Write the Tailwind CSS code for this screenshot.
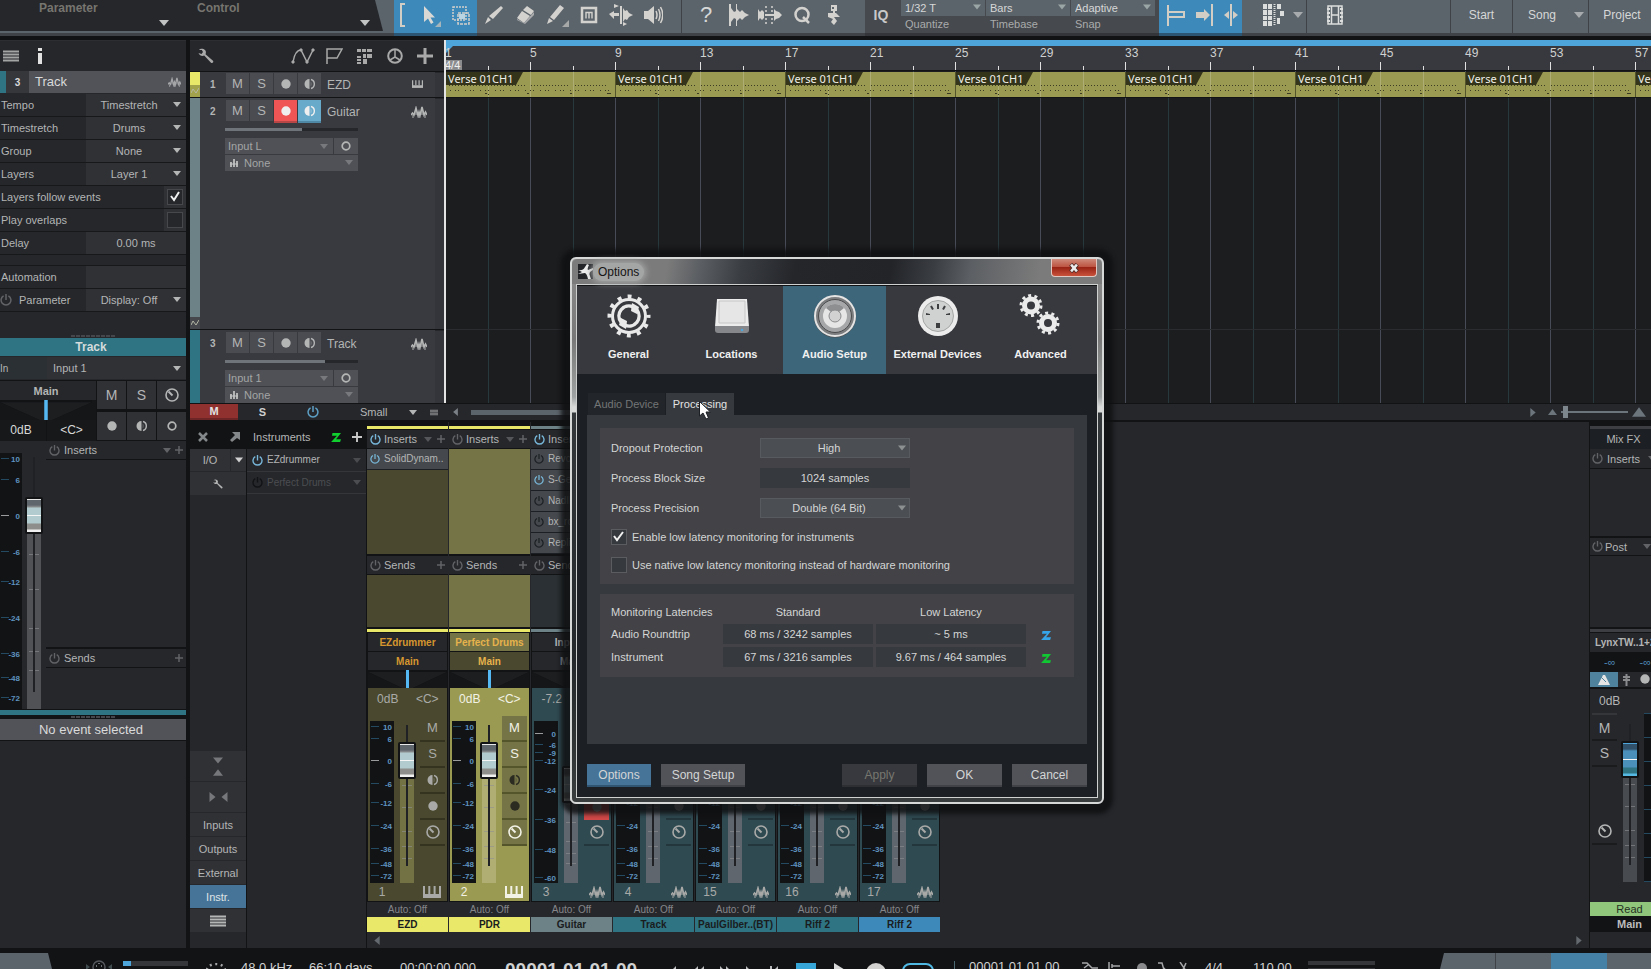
<!DOCTYPE html>
<html lang="en">
  <head>
    <meta charset="UTF-8" />
    <meta name="viewport" content="width=device-width, initial-scale=1.0" />
    <title>Song - Options</title>
    <script src="https://cdn.jsdelivr.net/npm/@tailwindcss/browser@4"></script>
  </head>

  <body class="relative flex h-screen flex-col overflow-hidden bg-[#121315] font-['Liberation_Sans',sans-serif] text-[11px] leading-4 text-[#b4b5b5] select-none">
    <!-- Icon set -->
    <svg class="hidden">
      <symbol id="down" viewBox="0 0 10 6"><path d="M0 0H10L5 6Z" fill="currentColor" /></symbol>
      <symbol id="left" viewBox="0 0 6 10"><path d="M6 0V10L0 5Z" fill="currentColor" /></symbol>
      <symbol id="right" viewBox="0 0 6 10"><path d="M0 0V10L6 5Z" fill="currentColor" /></symbol>
      <symbol id="up" viewBox="0 0 12 8"><path d="M0 8H12L6 0Z" fill="currentColor" /></symbol>
      <symbol id="plus" viewBox="0 0 16 16"><path d="M8 0V16M0 8H16" stroke="currentColor" stroke-width="3" /></symbol>
      <symbol id="list" viewBox="0 0 16 12"><path d="M0 1.5H16M0 4.5H16M0 7.5H16M0 10.5H16" stroke="currentColor" stroke-width="2" /></symbol>
      <symbol id="power" viewBox="0 0 12 12"><path d="M3.6 1.8A4.9 4.9 0 1 0 8.4 1.8M6 0V6" fill="none" stroke="currentColor" stroke-width="1.5" /></symbol>
      <symbol id="wave" viewBox="0 0 16 12"><path d="M0 9L1.500 7L3 9L5 2L7 9.500L8 6L9 9.500L11 1L13 9L14.500 6L16 9" fill="none" stroke="currentColor" stroke-width="1.600" /><path d="M2 9V12M5 4V9M8 8V12M11 3V9M14 8V12" stroke="currentColor" stroke-width="1" /></symbol>
      <symbol id="keys" viewBox="0 0 18 12"><path d="M1 0V11H17V0M6.300 0V8M11.600 0V8" fill="none" stroke="currentColor" stroke-width="2" /><path d="M0 8H18V12H0Z" fill="currentColor" /></symbol>
      <symbol id="half" viewBox="0 0 12 12"><path d="M5.500 1A5 5 0 0 0 5.500 11Z" fill="currentColor" /><path d="M7 1.500A4.700 4.700 0 0 1 7 10.500" fill="none" stroke="currentColor" stroke-width="1.400" /><path d="M6.500 3.500A3 3 0 0 1 6.500 8.500Z" fill="currentColor" opacity=".35" /></symbol>
      <symbol id="dot" viewBox="0 0 12 12"><circle cx="6" cy="6" r="4.700" fill="currentColor" /></symbol>
      <symbol id="ring" viewBox="0 0 12 12"><circle cx="6" cy="6" r="3.800" fill="none" stroke="currentColor" stroke-width="1.700" /></symbol>
      <symbol id="knob" viewBox="0 0 14 14"><circle cx="7" cy="7" r="6" fill="none" stroke="currentColor" stroke-width="1.600" /><path d="M7.500 7.500L3.500 3.500" stroke="currentColor" stroke-width="2" /></symbol>
      <symbol id="wrench" viewBox="0 0 16 16"><path d="M1 2C2 .5 5 0 7 2C8.300 3.500 8 5 7.500 6.200L15 12.800C16 14 14.500 15.800 13 14.800L6.200 7.600C4 8.500 1.500 7.500 .5 5L3.500 6L5 4L3.800 2Z" fill="currentColor" /></symbol>
      <symbol id="zed" viewBox="0 0 12 10"><path d="M1.500 0H11L5.500 7H11L10 10H0L6.500 3H1Z" fill="currentColor" /></symbol>
      <symbol id="line" viewBox="0 0 8 6"><path d="M0 5L2 1L5 5L8 0" fill="none" stroke="currentColor" stroke-width="1" /></symbol>
      <symbol id="bars" viewBox="0 0 8 8"><path d="M1 3V8M4 0V8M7 2V8" stroke="currentColor" stroke-width="1.700" /><path d="M0 5H8" stroke="currentColor" stroke-width="1" /></symbol>
      <symbol id="grip" viewBox="0 0 44 2"><path d="M0 1H44" stroke="#45464b" stroke-width="2" stroke-dasharray="4 1" /></symbol>
      <symbol id="pan" viewBox="0 0 79 18" preserveAspectRatio="none"><path d="M0 0H79V18H0Z" fill="#121315" /><path d="M0 2L34 18H45L79 2Z" fill="#1d1e20" /><path d="M0 2L34 18H0ZM79 2L45 18H79Z" fill="#151618" /><path d="M39.500 0V18" stroke="#55b9f3" stroke-width="3" /></symbol>
    </svg>

    <!-- Main toolbar -->
    <header class="flex h-9 shrink-0 text-[12px] text-[#d6d7d7]">
      <div class="relative flex w-[394px] shrink-0 border-b-[3px] border-[#3f4247] bg-[#5c646b]">
        <svg class="absolute inset-0 h-[31px] w-[384px]" viewBox="0 0 384 31" preserveAspectRatio="none"><path d="M0 0H375L383 31H0Z" fill="#25272b" /></svg>
        <div class="relative flex w-[175px] items-start pl-[39px] font-bold text-[#77756f]">Parameter<svg class="mt-5 ml-[61px] h-[6px] w-[10px] text-[#c2c4c4]"><use href="#down" /></svg></div>
        <div class="relative flex items-start pl-[22px] font-bold text-[#77756f]">Control<svg class="mt-5 ml-[120px] h-[6px] w-[10px] text-[#c2c4c4]"><use href="#down" /></svg></div>
      </div>
      <div class="flex items-center border-b-[3px] border-[#2b5573] bg-[#3d8aba] pb-1">
        <button class="grid w-[18px] place-items-center" aria-label="Tool group"><svg class="h-6 w-[6px]" viewBox="0 0 6 24"><path d="M5 1H1V23H5" fill="none" stroke="#d2cdc5" stroke-width="2" /></svg></button>
        <button class="grid w-[33px] place-items-center" aria-label="Arrow tool"><svg class="h-6 w-6" viewBox="0 0 24 24"><path d="M7 3V19L11 15.500L14 21L16.500 19.500L13.500 14.500H18Z" fill="#d9d8d5" /><path d="M24 18V24H18Z" fill="#a5b5bb" /></svg></button>
        <button class="grid w-8 place-items-center" aria-label="Range tool"><svg class="h-5 w-5" viewBox="0 0 20 20" fill="none" stroke="#d2d0cc" stroke-width="1.500"><path d="M2 2H15V15H2Z" stroke-dasharray="2 1" /><path d="M7 8H18V19H7Z" stroke-dasharray="3 1" /><path d="M8 9H14V14H8Z" fill="#b9d4e2" stroke="none" /></svg></button>
      </div>
      <div class="flex w-[204px] items-center border-b-[3px] border-[#3f4247] bg-[#5c646b] pb-1">
        <button class="grid w-8 place-items-center" aria-label="Split tool"><svg class="h-5 w-5" viewBox="0 0 20 20" fill="#d4d2cf"><path d="M18 1L20 3L10 14L6 11ZM5 12L8 15L2 19Z" /></svg></button>
        <button class="grid w-8 place-items-center" aria-label="Eraser tool"><svg class="h-5 w-5" viewBox="0 0 20 20" fill="#d4d2cf"><path d="M12 1L19 6L16 10L8 5ZM7 6L15 11L9 18L2 13Z" /><path d="M19 7V10L10 19L2 15V14L9 18Z" fill="#a9abad" /></svg></button>
        <button class="grid w-8 place-items-center" aria-label="Paint tool"><svg class="h-6 w-6" viewBox="0 0 24 24" fill="#d4d2cf"><path d="M15 2L19 5L9 17L5 14ZM4 15L8 18L2 21Z" /><path d="M24 17V24H17Z" fill="#a7a9a9" /></svg></button>
        <button class="grid w-8 place-items-center" aria-label="Mute tool"><svg class="h-[18px] w-[18px]" viewBox="0 0 18 18" fill="none" stroke="#d4d2cf"><path d="M2 2H16V16H2Z" stroke-width="2.500" /><path d="M6 12.500V6.500H12V12.500M9 6.500V12.500" stroke-width="1.400" /></svg></button>
        <button class="grid w-8 place-items-center" aria-label="Bend tool"><svg class="h-6 w-6" viewBox="0 0 24 24" fill="#d4d2cf"><path d="M11 3H13V21H11ZM0 11L5 8V10H10V13H5V16ZM14 5L16 8L18 7L20 10L24 12L20 14L18 17L16 16L14 19ZM5 1L10 3L5 5ZM14 19L18 21L14 23Z" /></svg></button>
        <button class="grid w-8 place-items-center" aria-label="Listen tool"><svg class="h-5 w-5" viewBox="0 0 20 20" fill="#d4d2cf"><path d="M1 6H5L11 1V19L5 14H1Z" /><path d="M13 6Q15 10 13 14M15.500 4Q18.500 10 15.500 16M17.500 2Q22 10 17.500 18" fill="none" stroke="#d4d2cf" stroke-width="1.500" /></svg></button>
      </div>
      <div class="flex w-[184px] items-center border-b-[3px] border-l border-[#3f4247] bg-[#5c646b] pb-1 pl-2">
        <button class="w-8 text-[22px] leading-6" aria-label="Help">?</button>
        <button class="grid w-8 place-items-center" aria-label="Transient detection"><svg class="h-6 w-6" viewBox="0 0 24 24" fill="#d4d2cf"><path d="M3 1H5V23H3ZM10 1H11V23H10ZM5 5L8 9L10 8V16L8 15L5 19ZM11 6L14 9L16 7L19 10L23 12L19 14L16 17L14 15L11 18Z" /></svg></button>
        <button class="grid w-8 place-items-center" aria-label="Strip silence"><svg class="h-6 w-6" viewBox="0 0 24 24" fill="#d4d2cf"><path d="M0 6L2 9L4 7L6 9V15L4 17L2 15L0 18ZM16 6L18 8L21 9L24 12L21 15L18 16L16 18ZM7 11H16V13H7Z" /><path d="M8 3V21M14 3V21" stroke="#d4d2cf" stroke-dasharray="2 2" stroke-width="1.500" /></svg></button>
        <button class="grid w-8 place-items-center" aria-label="Quantize"><svg class="h-5 w-5" viewBox="0 0 20 20" fill="none" stroke="#d4d2cf" stroke-width="2.500"><circle cx="10" cy="9.500" r="6.500" /><path d="M11 12L17 18" /></svg></button>
        <button class="grid w-8 place-items-center" aria-label="Macros"><svg class="h-5 w-5" viewBox="0 0 20 20" fill="#d4d2cf"><path d="M7 0H13V6H7ZM9 6H11V8H9ZM4 8H12L16 12H10L13 16L10 20L7 17L9 14L4 12Z" /><path d="M8 2H10V4H8Z" fill="#5c646b" /></svg></button>
      </div>
      <div class="flex border-b-[3px] border-[#33353a] bg-[#46494d] text-[11px]">
        <button class="w-[36px] pr-1 pb-1 text-[14px] font-bold text-[#c8c8c8]">IQ</button>
        <div class="flex gap-px">
          <div class="relative w-[84px]">
            <select id="quantize" class="block h-4 w-full appearance-none bg-[#5c646b] pl-1 leading-4 outline-none"><option>1/32 T</option></select>
            <svg class="pointer-events-none absolute top-1 right-1 h-[6px] w-2 text-[#9aa6a6]"><use href="#down" /></svg>
            <label for="quantize" class="block pl-1 text-[#a9abac]">Quantize</label>
          </div>
          <div class="relative w-[84px]">
            <select id="timebase" class="block h-4 w-full appearance-none bg-[#5c646b] pl-1 leading-4 outline-none"><option>Bars</option></select>
            <svg class="pointer-events-none absolute top-1 right-1 h-[6px] w-2 text-[#9aa6a6]"><use href="#down" /></svg>
            <label for="timebase" class="block pl-1 text-[#a9abac]">Timebase</label>
          </div>
          <div class="relative mr-1 w-[84px]">
            <select id="snap" class="block h-4 w-full appearance-none bg-[#5c646b] pl-1 leading-4 outline-none"><option>Adaptive</option></select>
            <svg class="pointer-events-none absolute top-1 right-1 h-[6px] w-2 text-[#9aa6a6]"><use href="#down" /></svg>
            <label for="snap" class="block pl-1 text-[#a9abac]">Snap</label>
          </div>
        </div>
      </div>
      <div class="flex w-[83px] items-center justify-between border-b-[3px] border-[#2b5573] bg-[#3d8aba] pr-1 pb-1 pl-2">
        <button aria-label="Snap to start"><svg class="block h-6 w-[18px]" viewBox="0 0 18 24" fill="none" stroke="#d2cdc5" stroke-width="2"><path d="M1 2V23M2 9H17V14H2" /></svg></button>
        <button aria-label="Autoscroll"><svg class="block h-6 w-[18px]" viewBox="0 0 18 24" fill="#d2cdc5"><path d="M15 1H17V23H15ZM0 9H8V6L14 12L8 18V15H0Z" /></svg></button>
        <button aria-label="Cursor follows edit"><svg class="block h-6 w-[14px]" viewBox="0 0 14 24" fill="#d2cdc5"><path d="M6 1H8V23H6ZM0 12L5 8V16ZM14 12L9 8V16Z" /></svg></button>
      </div>
      <div class="flex w-[65px] items-center gap-2 border-r border-b-[3px] border-[#3f4247] bg-[#5c646b] pb-1 pl-[21px]">
        <button aria-label="Grid"><svg class="block h-[22px] w-[22px]" viewBox="0 0 22 22" fill="#dcdddd"><path d="M0 0H4V5H0ZM5 0H9V5H5ZM0 6H4V11H0ZM5 6H9V11H5ZM0 12H4V16H0ZM5 12H9V16H5ZM0 17H4V22H0ZM5 17H9V22H5ZM14 0H18V5H14ZM17 7H21V12H17ZM14 14H17V20H14Z" /><path d="M11.500 0V22" stroke="#dcdddd" stroke-dasharray="1 1" stroke-width="2" /></svg></button>
        <svg class="h-[6px] w-[10px] text-[#a7abad]"><use href="#down" /></svg>
      </div>
      <div class="flex grow items-center border-b-[3px] border-[#3f4247] bg-[#5c646b] pb-1 pl-5">
        <button aria-label="Video"><svg class="block h-5 w-4" viewBox="0 0 16 20" fill="none" stroke="#dcdddd" stroke-width="1.500"><path d="M1 1H15V19H1ZM4.500 1V19M11.500 1V19M4 10H12" /><path d="M1.500 3V18M14.500 3V18" stroke-dasharray="2 2" stroke-width="3" /></svg></button>
      </div>
      <button class="w-[62px] border-b-[3px] border-l border-[#3f4247] bg-[#5c646b] pb-1">Start</button>
      <button class="flex w-[76px] items-center justify-between border-b-[3px] border-l border-[#3f4247] bg-[#5c646b] pr-1 pb-1 pl-[15px]">Song<svg class="h-[6px] w-[10px] text-[#a7abad]"><use href="#down" /></svg></button>
      <button class="w-[63px] border-b-[3px] border-l border-[#3f4247] bg-[#5c646b] pb-1 pl-1">Project</button>
    </header>

    <main class="mt-1 flex min-h-0 grow gap-1">
      <!-- Inspector -->
      <aside class="flex w-[186px] shrink-0 flex-col bg-[#25272b]">
        <div class="flex h-[30px] items-center gap-[18px] border-t border-[#2d2e32] pl-[3px] text-[#a3a4a4]">
          <button aria-label="Menu"><svg class="block h-3 w-4"><use href="#list" /></svg></button>
          <button aria-label="Inspector"><svg class="block h-4 w-[6px]" viewBox="0 0 6 16"><path d="M1 0H5V3H1ZM1 5H5V16H1Z" fill="#e2e2e2" /></svg></button>
        </div>
        <div class="mt-px flex h-[22px] items-center bg-[#515359] text-[13px] text-[#dadada]">
          <span class="h-full w-[6px] bg-[#2e7483]"></span>
          <span class="h-full w-[23px] bg-[#36373b] text-center text-[10px] leading-[23px] font-bold">3</span>
          <span class="grow pl-[6px]">Track</span>
          <svg class="mr-[5px] h-[10px] w-[13px] text-[#a5a6a8]"><use href="#wave" /></svg>
        </div>
        <div id="inspector" class="mt-px flex flex-col"></div>

        <svg class="mx-auto mt-[23px] h-[2px] w-11 shrink-0"><use href="#grip" /></svg>
        <h2 class="mt-px h-[18px] bg-[#2e7483] pr-1 text-center text-[12px] leading-[18px] font-bold text-[#d5dbdc]">Track</h2>
        <div class="relative mt-px flex h-[22px] items-center bg-[#303135]">
          <label for="trackIn" class="h-full w-[47px] bg-[#2a3033] text-[10px] leading-[24px]">In</label>
          <select id="trackIn" class="grow appearance-none pl-[6px] text-[11px] text-[#b4b5b5] outline-none"><option>Input 1</option></select>
          <svg class="pointer-events-none absolute right-[5px] h-[5px] w-2"><use href="#down" /></svg>
        </div>
        <div class="mt-px flex h-[61px] bg-[#121315] pt-px">
          <div class="w-[97px] pr-px">
            <div class="h-[19px] bg-[#25272b] pr-1 text-center leading-5 font-bold">Main</div>
            <div class="bg-[#151618] pr-1"><svg class="block h-5 w-full"><use href="#pan" /></svg></div>
            <div class="grid h-5 grid-cols-[46px_1fr] gap-px text-center text-[12px] leading-[21px] text-[#d8d8d8]"><span class="bg-[#17181a] pr-1">0dB</span><span class="bg-[#17181a]">&lt;C&gt;</span></div>
          </div>
          <div class="grid grow grid-cols-3 grid-rows-2 gap-x-px gap-y-[3px] pb-px text-[14px]">
            <button class="bg-[#303135]">M</button>
            <button class="bg-[#303135]">S</button>
            <button class="grid place-items-center bg-[#303135]" aria-label="Monitor level"><svg class="h-[14px] w-[14px]"><use href="#knob" /></svg></button>
            <button class="grid place-items-center bg-[#303135]" aria-label="Record"><svg class="h-3 w-3"><use href="#dot" /></svg></button>
            <button class="grid place-items-center bg-[#303135]" aria-label="Monitor"><svg class="h-3 w-3"><use href="#half" /></svg></button>
            <button class="grid place-items-center bg-[#303135]" aria-label="Mono"><svg class="h-3 w-3"><use href="#ring" /></svg></button>
          </div>
        </div>
        <div class="flex h-[268px]">
          <div class="flex w-[46px] items-end">
            <div id="trackMeter" class="h-[256px] w-[22px] bg-[#121315]"></div>
            <div id="trackFader" class="ml-[3px] h-[256px] w-[18px]"></div>
          </div>
          <div class="grow">
            <div class="flex h-[19px] items-center gap-1 border-b border-[#121315] px-[3px]">
              <svg class="h-[11px] w-[11px] text-[#626366]"><use href="#power" /></svg><span class="grow">Inserts</span>
              <svg class="h-[5px] w-2 text-[#626366]"><use href="#down" /></svg><svg class="h-2 w-2 text-[#626366]"><use href="#plus" /></svg>
            </div>
            <div class="mt-[187px] flex h-[21px] items-center gap-1 border-t-2 border-b border-[#121315] px-[3px]">
              <svg class="h-[11px] w-[11px] text-[#626366]"><use href="#power" /></svg><span class="grow">Sends</span>
              <svg class="h-2 w-2 text-[#626366]"><use href="#plus" /></svg>
            </div>
          </div>
        </div>
        <div class="h-[6px] border-t border-[#121315] bg-[#2e7483]"></div>
        <div class="bg-[#121315] py-px"><svg class="mx-auto block h-[2px] w-11"><use href="#grip" /></svg></div>
        <div class="h-[22px] border-b border-[#121315] bg-[#515359] pr-1 text-center text-[13px] leading-[22px] text-[#dadada]">No event selected</div>
      </aside>

      <div class="flex min-w-0 grow flex-col">
        <section class="flex h-[363px] shrink-0">
          <!-- Track list -->
          <div class="flex w-[254px] shrink-0 flex-col">
            <div class="flex h-[31px] items-center gap-[14px] border-t border-[#2d2e32] bg-[#25272b] pr-[11px] pl-2 text-[#a9a9a9]">
              <button aria-label="Track options"><svg class="block h-4 w-4"><use href="#wrench" /></svg></button>
              <span class="grow"></span>
              <button aria-label="Automation"><svg class="block h-4 w-6" viewBox="0 0 24 16" fill="none" stroke="currentColor"><path d="M2 14Q4 2 10 2L16 14L22 2" stroke-width="1.500" /><path d="M1 13H3V15H1ZM9 1H11V3H9ZM15 13H17V15H15ZM21 1H23V3H21Z" fill="currentColor" /></svg></button>
              <button aria-label="Marker track"><svg class="-ml-1 block h-4 w-[18px]" viewBox="0 0 18 16" fill="none" stroke="currentColor" stroke-width="1.500"><path d="M2 16V1H17L12 10H2" /></svg></button>
              <button aria-label="Arranger track"><svg class="block h-4 w-4" viewBox="0 0 16 16" fill="currentColor"><path d="M0 1H4V4H0ZM5 1H9V4H5ZM10 1H15V4H10ZM6 6H9V10H6ZM10 6H15V10H10ZM0 8H4V10H0ZM0 11H4V13H0ZM0 14H4V16H0ZM6 11H10V16H6Z" /></svg></button>
              <button aria-label="Tempo track"><svg class="block h-4 w-4" viewBox="0 0 16 16" fill="none" stroke="currentColor" stroke-width="2"><circle cx="8" cy="8" r="6.800" /><path d="M8 1V9L3 12M8 9L13 12" stroke-width="1.500" /></svg></button>
              <button aria-label="Add track"><svg class="block h-4 w-4"><use href="#plus" /></svg></button>
            </div>
            <div id="tracks" class="mt-px flex grow flex-col gap-px overflow-hidden"></div>
          </div>

          <!-- Arrangement -->
          <div class="flex min-w-0 grow flex-col overflow-hidden border-l-2 border-[#e4e4e4] bg-[#1c1d1f]">
            <div class="h-[6px] shrink-0 bg-[#4ea5da]"></div>
            <div id="ruler" class="-ml-px flex h-[25px] shrink-0 overflow-hidden border-b border-[#121315] bg-[#37393e]"></div>
            <div class="-ml-px flex grow flex-col bg-[repeating-linear-gradient(90deg,#474b58_0_1px,transparent_1px_43px,#27393d_43px_44px,transparent_44px_85px)]">
              <div id="clips" class="mt-px flex h-[26px] overflow-hidden border-b border-[#121315]"></div>
              <div class="mt-[231px] h-px bg-[#2a2c2f]"></div>
            </div>
          </div>
        </section>

        <!-- Track list footer and scroll bar -->
        <div class="mt-px flex h-4 shrink-0 items-center bg-[#25272b]">
          <button class="h-full w-12 border-b-2 border-[#6e2526] bg-[#90302f] leading-[14px] font-bold text-[#e3e3e3]">M</button>
          <button class="w-[49px] font-bold text-[#d0d0d0]">S</button>
          <button class="grid w-[52px] place-items-center text-[#5d9fc4]" aria-label="Power"><svg class="h-3 w-3"><use href="#power" /></svg></button>
          <label class="relative ml-[21px] w-[65px]"><select aria-label="Track size" class="block w-full appearance-none leading-4 outline-none"><option>Small</option></select><svg class="pointer-events-none absolute top-[6px] right-2 h-[5px] w-2"><use href="#down" /></svg></label>
          <svg class="ml-[5px] h-[9px] w-2 text-[#8a8b8d]"><use href="#list" /></svg>
          <svg class="ml-[15px] h-2 w-[5px] text-[#7a8086]"><use href="#left" /></svg>
          <div class="ml-[13px] h-[5px] w-[500px] bg-[#5c646b]"></div>
          <span class="grow"></span>
          <svg class="h-[9px] w-[6px] text-[#6c757c]"><use href="#right" /></svg>
          <svg class="ml-3 h-[6px] w-[9px] text-[#6c757c]"><use href="#up" /></svg>
          <input type="range" aria-label="Zoom" value="4" class="mx-1 h-3 w-[67px] appearance-none bg-[linear-gradient(#6c757c,#6c757c)] bg-[length:100%_2px] bg-center bg-no-repeat [&::-webkit-slider-thumb]:h-3 [&::-webkit-slider-thumb]:w-[5px] [&::-webkit-slider-thumb]:appearance-none [&::-webkit-slider-thumb]:bg-[#7d868d]" />
          <svg class="mr-[5px] h-[10px] w-[14px] text-[#6c757c]"><use href="#up" /></svg>
        </div>

        <!-- Console -->
        <section class="mt-[2px] flex min-h-0 grow">
          <div class="flex w-[176px] shrink-0 flex-col">
            <div class="flex h-[27px] items-center px-2 pt-[3px] text-[#b4b5b5]">
              <button aria-label="Close console"><svg class="block h-[10px] w-[10px]" viewBox="0 0 10 10"><path d="M1 1L9 9M9 1L1 9" stroke="#85888a" stroke-width="2.500" /></svg></button>
              <button aria-label="Detach" class="ml-[22px]"><svg class="block h-[10px] w-[10px]" viewBox="0 0 10 10"><path d="M2 0H10V8L7 6L2 10L0 8L5 3Z" fill="#85888a" /></svg></button>
              <span class="ml-[13px] grow">Instruments</span>
              <svg class="h-[9px] w-[11px] text-[#10cf2e]"><use href="#zed" /></svg>
              <button aria-label="Add instrument" class="-mr-1 ml-[10px]"><svg class="block h-[10px] w-[10px] text-[#c9c9c9]"><use href="#plus" /></svg></button>
            </div>
            <div class="flex grow gap-px">
              <nav class="flex w-14 flex-col gap-px bg-[#25272b]">
                <div class="flex h-[22px] gap-px"><button class="w-10 bg-[#303135]">I/O</button><button class="grid grow place-items-center bg-[#303135]" aria-label="I/O menu"><svg class="h-[6px] w-2 text-[#d0d0d0]"><use href="#down" /></svg></button></div>
                <button class="grid h-[23px] place-items-center bg-[#303135]" aria-label="Console options"><svg class="h-[10px] w-[10px]"><use href="#wrench" /></svg></button>
                <span class="grow"></span>
                <button class="flex h-[30px] flex-col items-center justify-center gap-[5px] bg-[#303135] text-[#75777a]" aria-label="Narrow height"><svg class="h-[7px] w-[10px]"><use href="#down" /></svg><svg class="h-[7px] w-[10px]"><use href="#up" /></svg></button>
                <button class="flex h-[30px] items-center justify-center gap-[5px] bg-[#303135] text-[#75777a]" aria-label="Narrow width"><svg class="h-[10px] w-[7px]"><use href="#right" /></svg><svg class="h-[10px] w-[7px]"><use href="#left" /></svg></button>
                <button class="h-[23px] bg-[#303135]">Inputs</button>
                <button class="h-[23px] bg-[#303135]">Outputs</button>
                <button class="h-[23px] bg-[#303135]">External</button>
                <button class="h-[23px] bg-[#467498] text-[#dfe3e6]">Instr.</button>
                <button class="mb-4 grid h-[23px] place-items-center bg-[#303135]" aria-label="Banks"><svg class="h-3 w-4"><use href="#list" /></svg></button>
              </nav>
              <div class="grow bg-[#25272b] text-[10px]">
                <div class="flex h-[23px] items-center gap-1 border-b border-[#34363a] px-[5px]"><svg class="h-[11px] w-[11px] text-[#77b6d8]"><use href="#power" /></svg><span class="grow">EZdrummer</span><svg class="h-[5px] w-2 text-[#4a4b4f]"><use href="#down" /></svg></div>
                <div class="flex h-[22px] items-center gap-1 border-b border-[#34363a] px-[5px] text-[#4c4d51]"><svg class="h-[11px] w-[11px] text-[#121315]"><use href="#power" /></svg><span class="grow">Perfect Drums</span><svg class="h-[5px] w-2"><use href="#down" /></svg></div>
              </div>
            </div>
          </div>

          <div class="ml-px flex min-w-0 grow flex-col bg-[#25272b]">
            <div id="channels" class="flex grow gap-px"></div>
            <div class="flex h-4 items-center justify-between px-[7px] text-[#63696f]"><svg class="h-[9px] w-[6px]"><use href="#left" /></svg><svg class="h-[9px] w-[6px]"><use href="#right" /></svg></div>
          </div>

          <!-- Main output -->
          <div class="flex w-[62px] shrink-0 flex-col overflow-hidden border-l border-[#121315] bg-[#25272b]">
            <div class="h-[7px] border-t-4 border-b-[3px] border-t-[#121315] border-b-[#3c3e43]"></div>
            <button class="h-5 bg-[#1c2024] pl-[6px] leading-5">Mix FX</button>
            <div class="flex h-5 items-center gap-1 border-b border-[#121315] pl-[2px] text-[11px]"><svg class="h-[11px] w-[11px] shrink-0 text-[#626366]"><use href="#power" /></svg>Inserts<svg class="ml-1 h-[5px] w-2 shrink-0 text-[#626366]"><use href="#down" /></svg></div>
            <div class="mt-[67px] flex h-5 items-center gap-[2px] border-t-2 border-b border-[#121315] pl-[2px] text-[11px]"><svg class="h-[11px] w-[11px] shrink-0 text-[#626366]"><use href="#power" /></svg><span class="w-[40px]">Post</span><svg class="h-[5px] w-2 shrink-0 text-[#626366]"><use href="#down" /></svg></div>
            <div class="mt-[71px] h-[5px] border-t-2 border-b-[3px] border-t-[#121315] border-b-[#3c3e43]"></div>
            <div class="h-5 border-t border-[#121315] pl-[5px] text-[10px] leading-5 font-bold whitespace-nowrap">LynxTW..1+2</div>
            <div class="flex h-5 justify-between bg-[#121315] pl-[14px] text-[11px] leading-5 text-[#4d86b4]"><span>-∞</span><span>-∞</span></div>
            <div class="flex h-[17px] border-b-2 border-[#121315]">
              <button class="grid w-[31px] place-items-center bg-[#4f829c]" aria-label="Metronome"><svg class="h-[10px] w-3" viewBox="0 0 12 10"><path d="M0 10L5 0H7L12 10Z" fill="#e5e5e5" /><path d="M3 2L8 7" stroke="#4f829c" /></svg></button>
              <button class="grid w-[19px] place-items-center" aria-label="Fader"><svg class="h-3 w-[7px]" viewBox="0 0 7 12"><path d="M3.500 0V12M0 3H7M0 6H7" stroke="#8a8b8d" stroke-width="2" /></svg></button>
              <svg class="mt-px ml-1 h-3 w-3 shrink-0"><use href="#dot" /></svg>
            </div>
            <div class="pl-[9px] text-[12px] leading-[24px]">0dB</div>
            <div class="flex grow">
              <div class="ml-[2px] w-[25px] text-center text-[14px]">
                <div class="h-[28px] border-t-2 border-b-2 border-t-[#35363a] border-b-[#1a1b1d] leading-[27px]">M</div>
                <div class="h-[26px] border-b-2 border-[#1a1b1d] leading-[25px]">S</div>
                <div class="mt-[52px] grid h-[26px] place-items-center border-b-2 border-[#1a1b1d]"><svg class="h-[14px] w-[14px]"><use href="#knob" /></svg></div>
              </div>
              <div id="mainFader" class="mt-[7px] ml-1 h-[162px] w-[18px]"></div>
              <div class="ml-[5px] h-[169px] grow bg-[repeating-linear-gradient(#234a60_0_1px,#121315_1px_24px)]"></div>
            </div>
            <div class="flex h-4 items-center justify-center pr-5 pb-1"><svg class="ml-11 h-3 w-[14px]" viewBox="0 0 14 12" fill="none" stroke="#a0a1a3" stroke-width="1.500"><path d="M1 2Q8 4 12 1Q8 7 1 10Q7 8 13 10M2 5Q8 6 11 8" /></svg></div>
            <div class="h-[14px] bg-[#8fc67c] pl-[18px] text-center leading-[14px] text-[#253022]">Read</div>
            <div class="h-4 bg-[#121315] pl-[18px] text-center font-bold text-[#bcbdbd]">Main</div>
            <div class="h-4"></div>
          </div>
        </section>
      </div>
    </main>

    <!-- Transport -->
    <footer class="relative mt-[5px] flex h-4 shrink-0 items-start overflow-hidden text-[14px] leading-none text-[#d0d1d1]">
      <svg class="h-4 w-[52px]" viewBox="0 0 52 16"><path d="M0 0H48L52 16H0Z" fill="#5c646b" /></svg>
      <svg class="mt-[7px] ml-[34px] h-[14px] w-[26px]" viewBox="0 0 26 14"><circle cx="13" cy="7" r="6" fill="none" stroke="#54575c" stroke-width="1.500" /><path d="M10 6H11M13 3V4M15 6H16" stroke="#6c6f73" stroke-width="2" /><path d="M0 4L4 7L0 10ZM26 4L22 7L26 10Z" fill="#3f4b4e" /></svg>
      <div class="mt-2 ml-[11px] h-[13px] w-[65px] border-b-[5px] border-[#34363a]"><div class="h-[5px] border-l-8 border-[#4ea5da] bg-[#34363a]"></div></div>
      <svg class="mt-[10px] ml-[18px] h-[14px] w-5" viewBox="0 0 20 14"><path d="M1 7A9 6 0 0 1 19 7" fill="none" stroke="#a5a6a8" stroke-dasharray="2 3.500" stroke-width="2.500" /></svg>
      <span class="mt-[8px] ml-[15px] w-[68px] text-[13px]">48.0 kHz</span>
      <span class="mt-[8px] w-[91px] text-[13px]">66:10 days</span>
      <span class="mt-[8px] w-[105px] text-[13px]">00:00:00.000</span>
      <span class="mt-[7px] w-[165px] text-[19px] font-bold">00001.01.01.00</span>
      <svg class="mt-[13px] h-3 w-[110px]" viewBox="0 0 110 12" fill="#b9babb"><path d="M6 0V12L0 6ZM28 0V12L22 6ZM34 0V12L28 6ZM50 0V12L56 6ZM56 0V12L62 6ZM76 0V12L82 6ZM100 0H102V12H100ZM108 0V12L102 6Z" /></svg>
      <button class="mt-[10px] ml-4 h-5 w-5 bg-[#36a5d8]" aria-label="Stop"></button>
      <button class="mt-[10px] ml-[18px]" aria-label="Play"><svg class="block h-5 w-4" viewBox="0 0 16 20"><path d="M0 0L16 10L0 20Z" fill="#d8d8d8" /></svg></button>
      <button class="mt-[10px] ml-4 h-5 w-5 rounded-full bg-[#d4d2d0]" aria-label="Record"></button>
      <button class="mt-[10px] ml-4 h-5 w-8 rounded-lg border-2 border-[#4fb8e3]" aria-label="Loop"></button>
      <span class="mt-2 ml-5 h-5 w-px bg-[#4c6a72]"></span>
      <span class="mt-[7px] ml-[14px] w-[113px] text-[13px]">00001.01.01.00</span>
      <svg class="mt-[9px] h-4 w-[109px]" viewBox="0 0 109 16" fill="none" stroke="#a5a6a8" stroke-width="1.500"><path d="M0 1H5L10 6H16M6 3L2 6M27 0V14M30 4H38M30 2V6M98 0L106 12M100 10L104 1M76 1H80L82 8L78 12M82 6L86 12" /><circle cx="60" cy="6" r="5" fill="#8a8b8d" stroke="none" /></svg>
      <span class="mt-[8px] ml-[14px] w-12 text-[13px]">4/4</span>
      <span class="mt-[8px] text-[13px]">110.00</span>
      <div class="mt-2 ml-4 h-[13px] w-[67px] border-t-4 border-b-[6px] border-[#34363a]"></div>
      <div class="absolute top-0 right-0 flex h-4 w-[211px] bg-[#5c646b] [clip-path:polygon(4px_0,100%_0,100%_100%,0_100%)]"><span class="w-14 border-r border-[#3f4247]"></span><span class="w-[55px]"></span><span class="w-[56px] bg-[#4580a7]"></span></div>
    </footer>

    <!-- Options dialog -->
    <div role="dialog" aria-label="Options" class="absolute top-[257px] left-[570px] w-[534px] rounded-md border-2 border-[#d6d8d8] bg-[linear-gradient(#8f8f8f_0,#777777_80px,#9fa2a2_138px,#d8dada_148px,#d8dada_153px,#34383a_154px,#24282a_400px,#3a3d3d)] p-1 pt-0 shadow-[0_1px_4px_9px_rgba(15,16,18,0.85)]">
      <div class="-mx-1 flex h-[25px] items-center rounded-t-md bg-[linear-gradient(100deg,#7b7b7b_18%,#5c5f63_24%,#3a3d42_32%,#24262a_42%,#222428_60%,#3a3d42_68%,#5c5f63_75%,#7b7b7b_88%)] pl-[6px]">
        <svg class="h-[15px] w-[15px]" viewBox="0 0 15 15"><path d="M0 0H15V15H0Z" fill="#222428" /><path d="M0 6Q5 7 7 3L9 0L11 1Q9 5 10 6L15 4V6Q10 8 12 12L13 15H10Q9 10 7 9L0 10L4 8Z" fill="#ededed" /></svg>
        <h1 class="rounded-full bg-[#a4a5a5] px-[5px] text-[12px] leading-[18px] text-[#141414] shadow-[0_0_6px_2px_#a4a5a5]">Options</h1>
        <button aria-label="Close" class="mr-[5px] mb-auto ml-auto grid h-[18px] w-[46px] place-items-center rounded-b border border-t-0 border-[#e0c9c2] bg-[linear-gradient(#cf8a7a_0,#bd5543_45%,#9a2415_50%,#c9523b)]"><svg class="h-[10px] w-3" viewBox="0 0 12 12"><path d="M2 1.500L10 10.500M10 1.500L2 10.500" stroke="#4a2a26" stroke-width="5" /><path d="M2.500 2L9.500 10M9.500 2L2.500 10" stroke="#ececec" stroke-width="3" /></svg></button>
      </div>
      <div class="border border-[#cfd1d1] bg-[#1c2024]">
        <div class="grid grid-cols-5 border-t border-[#121315] bg-[#37393e] pr-[5px] text-center font-bold text-[#f0f0f0]">
          <button class="flex h-[88px] flex-col items-center pt-2">
            <svg class="h-11 w-11" viewBox="-22 -22 44 44"><g fill="none" stroke="#e9e9e9"><circle r="16.500" stroke-width="3" /><circle r="19.500" stroke-width="4" stroke-dasharray="4 6.210" stroke-dashoffset="2" /><path d="M-8 6A10 10 0 0 1 4 -9.200M8 -6A10 10 0 0 1 -4 9.200" stroke-width="3.500" /></g><path d="M3 -13L10 -9L8 -2L2 -5ZM-3 13L-10 9L-8 2L-2 5Z" fill="#e9e9e9" /></svg>
            <span class="mt-[8px]">General</span>
          </button>
          <button class="flex h-[88px] flex-col items-center pt-2">
            <svg class="h-11 w-11" viewBox="0 0 44 44"><path d="M7 5H37L39 33H5Z" fill="#ececec" /><path d="M9 7H35V29H9Z" fill="#e6e6e6" stroke="#c6c6c6" /><path d="M5 32H39V36Q39 39 36 39H8Q5 39 5 36Z" fill="#85878a" /><circle cx="32" cy="36" r="1.300" fill="#4ea5da" /></svg>
            <span class="mt-[8px]">Locations</span>
          </button>
          <button class="flex h-[88px] flex-col items-center bg-[#3e667a] pt-2">
            <svg class="h-11 w-11" viewBox="0 0 44 44"><circle cx="22" cy="22.500" r="21" fill="#4a4c4e" /><circle cx="22" cy="22" r="20" fill="#7c7d7f" stroke="#e4e4e4" stroke-width="2" /><circle cx="22" cy="22" r="16.500" fill="#a6a7a8" stroke="#4b4c4e" /><circle cx="22" cy="22" r="12" fill="#e6e6e6" /><path d="M13 14A12 12 0 0 1 31 14L26 18H18Z" fill="#8d8f91" /><circle cx="22" cy="22" r="6" fill="#d2d2d2" stroke="#8b8c8e" /></svg>
            <span class="mt-[8px]">Audio Setup</span>
          </button>
          <button class="flex h-[88px] flex-col items-center pt-2">
            <svg class="h-11 w-11" viewBox="0 0 44 44"><circle cx="22" cy="22" r="20" fill="#ececec" /><circle cx="22" cy="22" r="15.500" fill="#d0d1d1" stroke="#a5a6a6" /><path d="M20 29H24V34H20Z M10 19L14 20V21H10ZM34 19L30 20V21H34Z" fill="#3c3e40" /><path d="M22 10V15M15 12L17 15.500M29 12L27 15.500" stroke="#3c3e40" stroke-width="2" /></svg>
            <span class="mt-[8px] whitespace-nowrap">External Devices</span>
          </button>
          <button class="flex h-[88px] flex-col items-center pt-2">
            <svg class="h-11 w-11" viewBox="0 0 44 44" fill="none" stroke="#ebebeb"><circle cx="12" cy="11.500" r="6.500" stroke-width="5" /><circle cx="12" cy="11.500" r="10" stroke-width="3" stroke-dasharray="3 3.280" /><circle cx="29" cy="29" r="6.500" stroke-width="5" /><circle cx="29" cy="29" r="10" stroke-width="3" stroke-dasharray="3 3.280" /></svg>
            <span class="mt-[8px]">Advanced</span>
          </button>
        </div>

        <div class="px-[10px] pt-[19px] pb-[10px] text-[#d4d5d5]">
          <div role="tablist" class="flex gap-px pl-px">
            <button role="tab" class="h-[22px] w-[77px] bg-[#222529] text-[#737577]">Audio Device</button>
            <button role="tab" aria-selected="true" class="h-[22px] w-[68px] bg-[#36393e] text-[#e3e3e3]">Processing</button>
          </div>
          <div class="h-[329px] bg-[#36393e] px-[13px] pt-[13px]">
            <div class="bg-[#434347] px-[11px] pt-[10px] pb-[11px]">
              <div class="grid grid-cols-[149px_150px] items-center gap-y-[10px]">
                <label for="dropout">Dropout Protection</label>
                <div class="relative"><select id="dropout" class="block h-5 w-full appearance-none border border-[#575a5f] bg-[#4b4e53] pr-3 text-center leading-4 outline-none [text-align-last:center]"><option>High</option></select><svg class="pointer-events-none absolute top-[7px] right-1 h-[6px] w-2 text-[#8c9090]"><use href="#down" /></svg></div>
                <label for="block">Process Block Size</label>
                <input id="block" readonly value="1024 samples" class="h-5 min-w-0 bg-[#36393e] text-center outline-none" />
                <label for="precision">Process Precision</label>
                <div class="relative"><select id="precision" class="block h-5 w-full appearance-none border border-[#575a5f] bg-[#4b4e53] pr-3 text-center leading-4 outline-none [text-align-last:center]"><option>Double (64 Bit)</option></select><svg class="pointer-events-none absolute top-[7px] right-1 h-[6px] w-2 text-[#8c9090]"><use href="#down" /></svg></div>
              </div>
              <label class="mt-[11px] flex items-center gap-[5px]"><span class="relative h-4 w-4"><input type="checkbox" checked class="peer block h-4 w-4 appearance-none border border-[#5a5c60] bg-[#36393e]" /><svg class="pointer-events-none absolute inset-0 hidden h-4 w-4 peer-checked:block" viewBox="0 0 16 16"><path d="M3 7L6 11L12 3" fill="none" stroke="#f0f0f0" stroke-width="2" /></svg></span>Enable low latency monitoring for instruments</label>
              <label class="mt-3 flex items-center gap-[5px]"><span class="relative h-4 w-4"><input type="checkbox" class="peer block h-4 w-4 appearance-none border border-[#5a5c60] bg-[#36393e]" /><svg class="pointer-events-none absolute inset-0 hidden h-4 w-4 peer-checked:block" viewBox="0 0 16 16"><path d="M3 7L6 11L12 3" fill="none" stroke="#f0f0f0" stroke-width="2" /></svg></span>Use native low latency monitoring instead of hardware monitoring</label>
            </div>
            <div class="mt-[10px] bg-[#434347] pt-[7px] pb-[7px] pl-2">
              <table class="border-separate border-spacing-x-[3px] border-spacing-y-[3px] text-center">
                <tr><th class="h-[17px] w-[109px] pb-px text-left font-normal whitespace-nowrap">Monitoring Latencies</th><th class="w-[150px] pb-px font-normal">Standard</th><th class="w-[150px] pb-px font-normal">Low Latency</th><td class="w-[34px]"></td></tr>
                <tr><th class="text-left font-normal">Audio Roundtrip</th><td class="h-5 bg-[#36393e]">68 ms / 3242 samples</td><td class="bg-[#36393e]">~ 5 ms</td><td><svg class="mx-auto mt-[2px] block h-[9px] w-[11px] text-[#36a5ea]"><use href="#zed" /></svg></td></tr>
                <tr><th class="text-left font-normal">Instrument</th><td class="h-5 bg-[#36393e]">67 ms / 3216 samples</td><td class="bg-[#36393e]">9.67 ms / 464 samples</td><td><svg class="mx-auto mt-[2px] block h-[9px] w-[11px] text-[#10c932]"><use href="#zed" /></svg></td></tr>
              </table>
            </div>
          </div>
          <div class="mt-5 flex gap-[10px] text-[12px]">
            <button class="h-[23px] w-16 border-b-2 border-[#305573] bg-[#467498]">Options</button>
            <button class="mr-auto h-[23px] w-[84px] border-b-2 border-[#404247] bg-[#515359]">Song Setup</button>
            <button disabled class="h-[23px] w-[75px] border-b-2 border-[#2d2f33] bg-[#37393e] text-[#77776f]">Apply</button>
            <button class="h-[23px] w-[75px] border-b-2 border-[#404247] bg-[#515359]">OK</button>
            <button class="h-[23px] w-[75px] border-b-2 border-[#404247] bg-[#515359]">Cancel</button>
          </div>
        </div>
      </div>
      <svg class="pointer-events-none absolute top-[142px] left-[127px] h-[19px] w-3" viewBox="0 0 12 19"><path d="M.5 .5V15L4 12L7 18L9.500 17L7 11H11.500Z" fill="#fff" stroke="#1c2024" /></svg>
    </div>

    <script>
      const icon = (name, cls) => `<svg class="${cls}"><use href="#${name}" /></svg>`;

      // Inspector rows: label, value, kind
      const rows = [
        ["Tempo", "Timestretch", "select"],
        ["Timestretch", "Drums", "select"],
        ["Group", "None", "select"],
        ["Layers", "Layer 1", "select"],
        ["Layers follow events", true, "check"],
        ["Play overlaps", false, "check"],
        ["Delay", "0.00 ms", "text"],
        ["", "", "gap"],
        ["Automation", "", "text"],
        ["Parameter", "Display: Off", "select"],
      ];
      document.getElementById("inspector").innerHTML = rows
        .map(([label, value, kind], i) => {
          if (kind === "gap") return `<div class="h-[11px] border-b border-[#17181a]"></div>`;
          const id = "row" + i;
          const lead = label === "Parameter" ? icon("power", "mr-[6px] h-3 w-3 text-[#626366]") : "";
          let field = "";
          if (kind === "select")
            field = `<span class="relative h-full w-[100px]"><select id="${id}" class="block h-full w-full appearance-none bg-[#303135] pr-[14px] text-center outline-none [text-align-last:center]"><option>${value}</option></select>${icon("down", "pointer-events-none absolute top-2 right-[5px] h-[5px] w-2")}</span>`;
          if (kind === "text")
            field = `<input id="${id}" value="${value}" class="h-full w-[100px] bg-[#303135] text-center outline-none" />`;
          if (kind === "check")
            field = `<span class="relative grid h-full w-[22px] place-items-center bg-[#303135]"><input id="${id}" type="checkbox" ${value ? "checked" : ""} class="peer h-4 w-4 appearance-none border border-[#47484c] bg-[#25272b]" /><svg class="pointer-events-none absolute top-[3px] left-[3px] hidden h-4 w-4 peer-checked:block" viewBox="0 0 16 16"><path d="M4 7L7 11L12 3" fill="none" stroke="#f0f0f0" stroke-width="2" /></svg></span>`;
          return `<div class="flex h-[23px] items-center border-b border-[#17181a]">${lead}<label for="${id}" class="grow pl-px">${label}</label>${field}</div>`;
        })
        .join("");

      // Track headers
      const tracks = [
        { n: 1, name: "EZD", icon: "keys", strip: "bg-[#e9e868]", foot: "bg-[#a3a24c]", size: "h-[25px]" },
        { n: 2, name: "Guitar", icon: "wave", strip: "bg-[#6c8287]", foot: "bg-[#45474c]", size: "h-[231px]", armed: true, input: "Input L", level: 58 },
        { n: 3, name: "Track", icon: "wave", strip: "bg-[#2e7483]", foot: "hidden", size: "h-[74px]", input: "Input 1", level: 75 },
      ];
      document.getElementById("tracks").innerHTML = tracks
        .map((t) => {
          const btn = "grid h-[21px] w-[23px] place-items-center bg-[#4a4c51] pt-px";
          const rec = t.armed ? "grid h-[23px] w-[23px] place-items-center border-b-2 border-[#b84646] bg-[#f05555] pt-px text-[#efefef]" : btn;
          const mon = t.armed ? "grid h-[23px] w-[23px] place-items-center border-b-2 border-[#4f88a4] bg-[#68aaca] pt-px text-[#efefef]" : btn;
          const routing = t.input
            ? `<div class="mt-[5px] h-[3px] w-[133px] bg-[#25272b]"><div class="h-full bg-[#6e747a]" style="width:${t.level}%"></div></div>
               <div class="relative mt-[7px] flex h-4 w-[133px] gap-px"><select aria-label="Input" class="w-[108px] appearance-none bg-[#4f5156] pl-[3px] leading-4 text-[#a4a5a5] outline-none"><option>${t.input}</option></select><button class="grid w-6 place-items-center bg-[#4f5156]" aria-label="Mono">${icon("ring", "h-3 w-3")}</button>${icon("down", "pointer-events-none absolute top-[6px] right-[30px] h-[5px] w-2 text-[#77797c]")}</div>
               <div class="relative mt-px flex h-4 w-[133px] items-center bg-[#4f5156] pl-[5px]">${icon("bars", "h-2 w-2 text-[#c5c5c5]")}<select aria-label="Instrument" class="grow appearance-none pl-[6px] leading-4 text-[#a4a5a5] outline-none"><option>None</option></select>${icon("down", "pointer-events-none absolute right-[5px] h-[5px] w-2 text-[#77797c]")}</div>`
            : "";
          return `<div class="flex ${t.size} shrink-0 bg-[#383a3f]">
            <div class="flex w-[10px] flex-col ${t.strip}"><div class="mt-auto grid h-3 place-items-center ${t.foot}">${icon("line", "h-[6px] w-2 text-[#b5b6a5]")}</div></div>
            <div class="grow pl-[10px]">
              <div class="flex ${t.input ? "mt-[2px] h-[23px]" : "mt-px h-[22px]"} gap-px text-[13px]">
                <span class="w-[15px] text-[10px] leading-[23px] font-bold">${t.n}</span>
                <button class="${btn}">M</button><button class="${btn}">S</button>
                <button class="${rec}" aria-label="Record">${icon("dot", "h-3 w-3")}</button>
                <button class="${mon}" aria-label="Monitor">${icon("half", "h-3 w-3")}</button>
                <span class="grow pl-[5px] text-[12px] leading-6">${t.name}</span>
                ${t.icon === "keys" ? icon("keys", "mt-[7px] mr-3 h-2 w-[11px]") : icon("wave", "mt-[6px] mr-2 h-3 w-4")}
              </div>
              <div class="pl-[15px]">${routing}</div>
            </div>
            <div class="w-[9px] border-t border-[#25272b] bg-[#33353a]"></div>
          </div>`;
        })
        .join("");

      // Bar ruler and clips
      const ruler = [];
      for (let bar = 1; bar <= 57; bar += 4) {
        ruler.push(`<div class="relative w-[85px] shrink-0 text-[12px] leading-[14px] text-[#d0d1d1]">
          <svg class="absolute inset-0 h-6 w-[85px]" viewBox="0 0 85 24"><path d="M.5 16V24M43.500 20V24" stroke="#e0e0e0" />${bar === 1 ? '<path d="M0 0H8L0 8Z" fill="#4ea5da" />' : ""}</svg>
          <span class="relative">${bar}</span>${bar === 1 ? '<span class="relative block w-[17px] bg-[#8b8c8e] text-[11px] leading-[11px] text-[#f0f0f0]">4/4</span>' : ""}
        </div>`);
      }
      document.getElementById("ruler").innerHTML = ruler.join("");
      document.getElementById("clips").innerHTML = Array(8)
        .fill(`<div class="relative h-[25px] w-[170px] shrink-0 border-l border-[#55552c] bg-[#9b9a53] font-['Noto_Sans',sans-serif] text-[11px]">
          <svg class="absolute inset-0 h-[25px] w-[169px]" viewBox="0 0 169 25" stroke="#3c3c24"><path d="M42.500 0V25M84.500 0V25M127.500 0V25" stroke="#aeae74" /><path d="M0 0H77L70 13H0Z" fill="#34341b" stroke="none" /><path d="M3 13.500H80M85 13.500H124M129 13.500H160" stroke-dasharray="1 2" /><path d="M4 18.500H166" stroke-dasharray="1 4 1 2 1 6" /><path d="M39 21.500H41M42 22.500H43M81 21.500H83M124 21.500H126M161 21.500H165" /></svg>
          <span class="relative block pl-[2px] leading-[13px] text-[#f0f0ea]">Verse 01CH1</span>
        </div>`)
        .join("");

      // dB scale, drawn next to each fader
      const scale = (height, marks, width) =>
        `<svg class="block" width="${width}" height="${height}" font-size="8" font-weight="bold" fill="#5f93c0" text-anchor="end">${marks
          .map(([db, y]) => `<path d="M1 ${y - 3.5}H9" stroke="${db === 0 ? "#9a9b9d" : "#234a60"}" /><text x="${width - 2}" y="${y}">${db}</text>`)
          .join("")}</svg>`;
      const stripScale = [[10, 9], [6, 21], [0, 43], [-6, 66], [-12, 85], [-24, 108], [-36, 131], [-48, 146], [-72, 158]];
      const inputScale = [[0, 16], [-6, 27], [-9, 35], [-12, 43], [-24, 72], [-36, 102], [-48, 132], [-60, 160]];

      const thumb = "[&::-webkit-slider-thumb]:appearance-none [&::-webkit-slider-thumb]:w-[18px] [&::-webkit-slider-thumb]:h-[37px] [&::-webkit-slider-thumb]:rounded-xs [&::-webkit-slider-thumb]:border-2 [&::-webkit-slider-thumb]:border-[#121315]";
      const grey = "[&::-webkit-slider-thumb]:bg-[linear-gradient(#e8e8e8_0_1px,#5f666c_1px_6px,#8d9090_8px,#b1cbce_9px_16px,#f5f5f5_16px_17px,#b1cbce_17px_24px,#8e8e8c_25px_30px,#f0f0f0_31px)]";
      const blue = "[&::-webkit-slider-thumb]:bg-[linear-gradient(#4ea5da_0_1px,#31506a_1px_6px,#4a90bb_8px_16px,#f5f5f5_16px_17px,#4a90bb_17px_24px,#2e7483_25px_30px,#55b9e3_31px)]";
      const fader = (height, value, body, skin) => {
        const top = Math.round((height - 37) * (1 - value / 100)) + 18;
        const ticks = [0.2, 0.38, 0.58, 0.7, 0.8].map((f) => `M4 ${Math.round(top + (height - top) * f)}.5H14`).join("");
        return `<div class="relative h-full w-full">
          <svg class="absolute inset-0" width="18" height="${height}"><path d="M2 ${top}H16V${height}H2Z" fill="${body}" /><path d="${ticks}" stroke="#8f9094" opacity=".6" /><path d="M9 4V${height - 17}" stroke="#202124" stroke-width="2" /></svg>
          <input type="range" aria-label="Volume" value="${value}" class="absolute inset-0 m-0 h-full w-[18px] appearance-none bg-transparent [writing-mode:vertical-lr] [direction:rtl] ${thumb} ${skin}" />
        </div>`;
      };
      document.getElementById("trackMeter").innerHTML = scale(256, [[10, 9], [6, 30], [0, 66], [-6, 102], [-12, 132], [-24, 168], [-36, 204], [-48, 228], [-72, 248]], 22);
      document.getElementById("trackFader").innerHTML = fader(256, 80, "#505256", grey);
      document.getElementById("mainFader").innerHTML = fader(162, 83, "#484c50", blue);

      // Mixer channels
      const teal = { body: "bg-[#304a52]", area: "bg-[#2a3033]", line: "bg-[#6c8287]", label: "bg-[#2e7483]", strip: "#5f666e", cell: "border-[#22363b]" };
      const channels = [
        { n: 1, name: "EZD", title: "EZdrummer", on: true, inserts: [["SolidDynam..", true]], db: "0dB", vol: 83, icon: "keys", body: "bg-[#4a492f]", area: "bg-[#4a492f]", line: "bg-[#e9e868]", label: "bg-[#e9e868]", strip: "#737245", cell: "border-[#33331f]", head: "bg-[#25272b]", head2: "bg-[#25272b]" },
        { n: 2, name: "PDR", title: "Perfect Drums", inserts: [], db: "0dB", vol: 83, icon: "keys", lit: true, body: "bg-[#9b9a53]", area: "bg-[#757447]", line: "bg-[#e9e868]", label: "bg-[#e9e868]", strip: "#b0ae72", cell: "border-[#55552c] bg-[#757447]", head: "bg-[#757447]", head2: "bg-[#4a492f]" },
        { ...teal, n: 3, name: "Guitar", title: "Input L", on: true, inserts: [["Revolver", false], ["S-Gear", true], ["NadIR", false], ["bx_rock", false], ["Replika", false]], db: "-7.2", vol: 64, icon: "wave", armed: true, label: "bg-[#6c8287]" },
        { ...teal, n: 4, name: "Track", inserts: [], db: "0dB", vol: 83, icon: "wave" },
        { ...teal, n: 15, name: "PaulGilber..(BT)", inserts: [], db: "0dB", vol: 83, icon: "wave" },
        { ...teal, n: 16, name: "Riff 2", inserts: [], db: "0dB", vol: 83, icon: "wave" },
        { ...teal, n: 17, name: "Riff 2", inserts: [], db: "0dB", vol: 83, icon: "wave", label: "bg-[#3d8aba]" },
      ];
      document.getElementById("channels").innerHTML = channels
        .map((c) => {
          const orange = c.head ? "text-[#d6962f]" : "";
          const bright = c.lit ? "text-[#e6b24c]" : orange;
          const cell = `grid h-[26px] place-items-center border-b-2 ${c.cell}`;
          const dark = c.lit ? "h-3 w-3 text-[#2b2b22]" : "h-3 w-3";
          const power = c.on ? "h-[11px] w-[11px] text-[#77b6d8]" : "h-[11px] w-[11px] text-[#626366]";
          const slots = c.inserts
            .map(([name, on]) => `<div class="flex h-[21px] items-center gap-1 overflow-hidden border-b border-[#1c2024] bg-[#45494d] pl-[3px] text-[10px] whitespace-nowrap">${icon("power", on ? "h-[10px] w-[10px] shrink-0 text-[#77b6d8]" : "h-[10px] w-[10px] shrink-0 text-[#1c2024]")}${name}</div>`)
            .join("");
          return `<div class="flex w-[81px] shrink-0 flex-col bg-[#121315] pt-1">
            <div class="h-[3px] ${c.line}"></div>
            <div class="mb-px flex h-[19px] items-center gap-[3px] border-t border-[#121315] bg-[#25272b] px-[3px]">${icon("power", power)}<span class="grow">Inserts</span>${icon("down", "h-[5px] w-2 text-[#55565a]")}${icon("plus", "ml-[2px] h-2 w-2 text-[#626366]")}</div>
            <div class="h-[105px] ${c.area}">${slots}</div>
            <div class="mt-[2px] flex h-[18px] items-center gap-[3px] bg-[#25272b] px-[3px]">${icon("power", "h-[11px] w-[11px] text-[#626366]")}<span class="grow">Sends</span>${icon("plus", "h-2 w-2 text-[#626366]")}</div>
            <div class="mt-px h-[52px] ${c.area}"></div>
            <div class="mt-[2px] h-[3px] ${c.line}"></div>
            <div class="flex flex-col px-px text-center">
              <div class="mt-px h-[18px] ${c.head || "bg-[#25272b]"} text-[10px] leading-[19px] font-bold whitespace-nowrap ${bright}">${c.title || "Input 1"}</div>
              <div class="mt-px h-[18px] ${c.head2 || "bg-[#25272b]"} text-[10px] leading-[19px] font-bold ${bright}">Main</div>
              ${icon("pan", "block h-[18px] w-full")}
              <div class="${c.body} ${c.lit ? "text-[#f2f2e6]" : "text-[#a9aaa8]"}">
                <div class="grid h-[26px] grid-cols-2 text-[12px] leading-[22px]"><span>${c.db}</span><span>&lt;C&gt;</span></div>
                <div class="flex h-[169px] items-end pl-[2px]">
                  <div class="h-[162px] w-6 bg-[#121315]">${scale(162, c.n === 3 ? inputScale : stripScale, 24)}</div>
                  <div class="ml-1 h-[162px] w-[18px]">${fader(162, c.vol, c.strip, grey)}</div>
                  <div class="ml-1 h-full w-[25px] pt-[2px] text-[13px]">
                    <button class="${cell} w-full">M</button><button class="${cell} w-full">S</button>
                    <button class="${cell} w-full" aria-label="Monitor">${icon("half", dark)}</button>
                    <button class="${c.armed ? "grid h-[26px] place-items-center bg-[#d04848]" : cell} w-full" aria-label="Record">${icon("dot", dark)}</button>
                    <button class="${cell} w-full" aria-label="Pan">${icon("knob", "h-[14px] w-[14px]")}</button>
                  </div>
                </div>
                <div class="flex h-[18px] items-center justify-between pr-[6px] text-[12px]"><span class="w-7 text-center">${c.n}</span>${icon(c.icon, c.icon === "keys" ? "h-3 w-[18px]" : "h-3 w-4")}</div>
              </div>
            </div>
            <div class="mt-px h-[15px] bg-[#25272b] text-center text-[10px] leading-[15px] text-[#85868a]">Auto: Off</div>
            <div class="h-[15px] ${c.label} overflow-hidden text-center text-[10px] leading-[15px] font-bold whitespace-nowrap text-[#1a1c1e]">${c.name}</div>
          </div>`;
        })
        .join("");
    </script>
  </body>
</html>
